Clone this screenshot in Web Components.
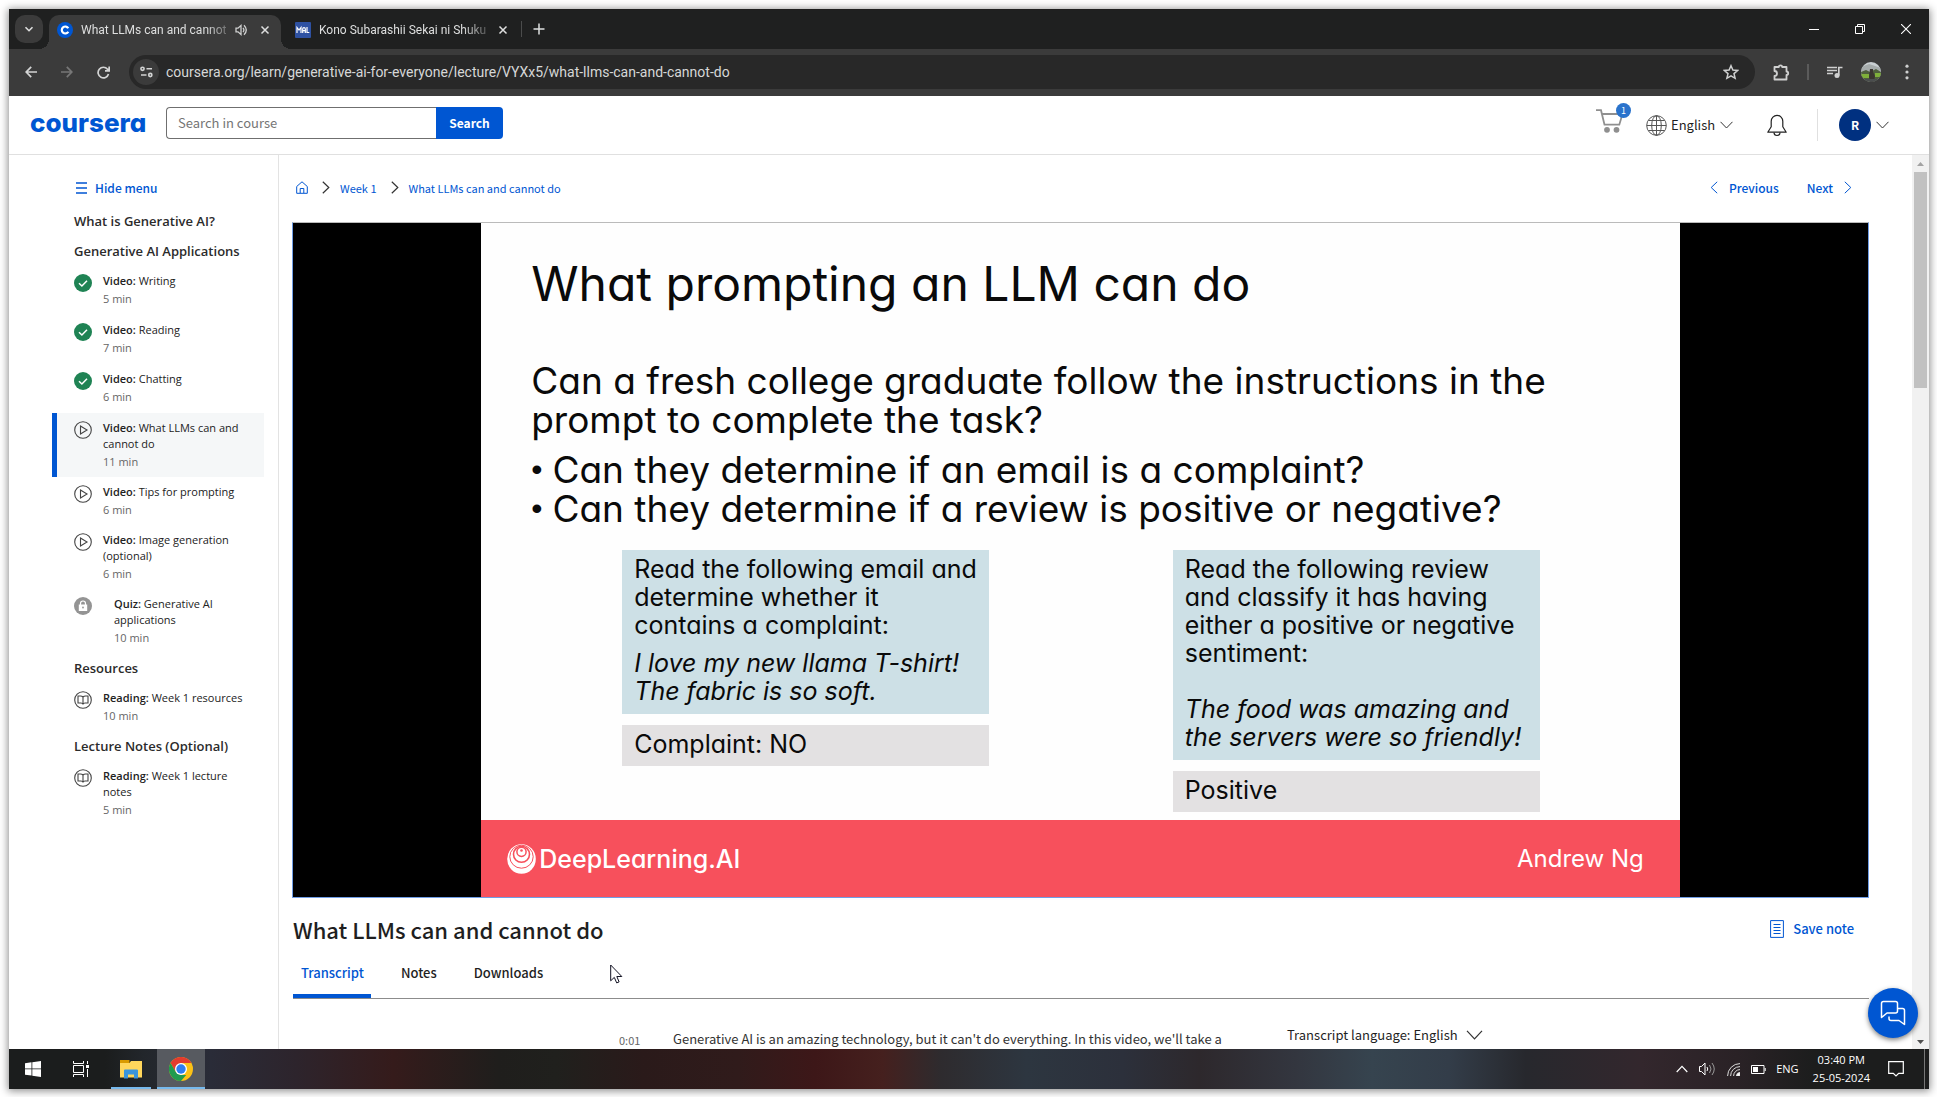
<!DOCTYPE html>
<html lang="en">
<head>
<meta charset="utf-8">
<title>What LLMs can and cannot do | Coursera</title>
<style>
  html, body { height: 100%; }
  body { margin: 0; box-sizing: border-box; padding: 9px 8px 8px 9px; background: #fff; font-family: "Noto Sans CJK SC", "Open Sans", sans-serif; color: #1f1f1f; overflow: hidden; }
</style>
</head>
<body>
<desktop-screen>
  <browser-tabs></browser-tabs>
  <browser-toolbar></browser-toolbar>
  <course-header></course-header>
  <course-body>
    <course-sidebar slot="side">
      <nav-section heading="What is Generative AI?"></nav-section>
      <nav-section heading="Generative AI Applications">
        <nav-item kind="Video" icon="done" time="5 min">Writing</nav-item>
        <nav-item kind="Video" icon="done" time="7 min">Reading</nav-item>
        <nav-item kind="Video" icon="done" time="6 min">Chatting</nav-item>
        <nav-item kind="Video" icon="play" time="11 min" active>What LLMs can and cannot do</nav-item>
        <nav-item kind="Video" icon="play" time="6 min">Tips for prompting</nav-item>
        <nav-item kind="Video" icon="play" time="6 min">Image generation (optional)</nav-item>
        <nav-item kind="Quiz" icon="lock" time="10 min">Generative AI applications</nav-item>
      </nav-section>
      <nav-section heading="Resources">
        <nav-item kind="Reading" icon="book" time="10 min">Week 1 resources</nav-item>
      </nav-section>
      <nav-section heading="Lecture Notes (Optional)">
        <nav-item kind="Reading" icon="book" time="5 min">Week 1 lecture notes</nav-item>
      </nav-section>
    </course-sidebar>
    <lecture-main>
      <video-stage>
        <lecture-slide></lecture-slide>
      </video-stage>
    </lecture-main>
  </course-body>
  <task-bar slot="taskbar"></task-bar>
</desktop-screen>

<script>
const base = `:host,*{box-sizing:border-box} button{font:inherit;color:inherit;background:none;border:0;padding:0;margin:0;display:flex;align-items:center} a{color:inherit;text-decoration:none} svg{display:block;flex:none} select{appearance:none;font:inherit;color:inherit;background:none;border:0;padding:0;margin:0}`;
function define(name, render) {
  customElements.define(name, class extends HTMLElement {
    connectedCallback() {
      if (this.shadowRoot) return;
      this.attachShadow({ mode: 'open' }).innerHTML = render(this);
    }
  });
}
const S = css => `<style>${base}${css}</style>`;

define('desktop-screen', () => S(`
  :host{display:flex;flex-direction:column;height:100%;background:#fff;box-shadow:0 1px 8px 1px rgba(0,0,0,.45)}
  .win{flex:1;min-height:0;display:flex;flex-direction:column}
`) + `<div class="win"><slot></slot></div><slot name="taskbar"></slot>`);

define('browser-tabs', () => S(`
  :host{display:flex;flex:none;height:40px;background:#1f2020;color:#dedfdf;font:12px/16px Roboto,sans-serif;padding:6px 0 0 6px;align-items:flex-start}
  .search{width:28px;height:28px;border-radius:10px;background:#3b3b3b;justify-content:center}
  .tab{display:flex;align-items:center;height:34px;padding:0 11px 5px 8px;width:232px;margin-left:6px;gap:8px}
  .tab.on{background:#3b3b3b;border-radius:10px 10px 0 0;position:relative}
  .tab.on::before,.tab.on::after{content:"";position:absolute;bottom:0;width:10px;height:10px}
  .tab.on::before{left:-10px;background:radial-gradient(circle at 0 0,transparent 10px,#3b3b3b 10px)}
  .tab.on::after{right:-10px;background:radial-gradient(circle at 100% 0,transparent 10px,#3b3b3b 10px)}
  .t{flex:1;white-space:nowrap;-webkit-mask-image:linear-gradient(90deg,#000 86%,rgba(0,0,0,.3))}
  .x{margin-left:4px}
  .sep{width:1px;height:16px;background:#4b4c4c;margin:6px 11px 0 2px}
  .plus{margin-top:8px}
  .ctl{margin-left:auto;display:flex;gap:36px;padding:9px 18px 0 0}
`) + `
  <button class="search" aria-label="Search tabs"><svg width="10" height="10" viewBox="0 0 10 10" fill="none" stroke="#dedfdf" stroke-width="1.6"><path d="M1.5 3.2 5 6.7 8.500 3.200"/></svg></button>
  <div class="tab on">
    <svg width="16" height="16" viewBox="0 0 16 16"><circle cx="8" cy="8" r="8" fill="#0056d2"/><path d="M11.300 9.800A3.500 3.500 0 1 1 11.300 6.200" fill="none" stroke="#fff" stroke-width="2.200"/></svg>
    <span class="t">What LLMs can and cannot</span>
    <svg width="13" height="12" viewBox="0 0 13 12" fill="none" stroke="#cfd0d0" stroke-width="1.300"><path d="M1 4.200h2L6 1.500v9L3 7.800H1zM8 3.800q1.800 2.200 0 4.400M9 1.200q4.600 4.800 0 9.600"/></svg>
    <button class="x" aria-label="Close tab"><svg width="10" height="10" viewBox="0 0 10 10" stroke="#dedfdf" stroke-width="1.500"><path d="M1.500 1.500l7 7M8.500 1.500l-7 7"/></svg></button>
  </div>
  <div class="tab">
    <svg width="16" height="16" viewBox="0 0 16 16"><rect width="16" height="16" rx="1" fill="#2e51a2"/><path d="M2 11V5.500L4 8 6 5.500V11M7.700 11V7q0-1.300 1.300-1.300T10.300 7v4M7.700 8.700h2.600M12 5v5.500h2.300" fill="none" stroke="#fff" stroke-width="1.200"/></svg>
    <span class="t">Kono Subarashii Sekai ni Shuku</span>
    <button class="x" aria-label="Close tab"><svg width="10" height="10" viewBox="0 0 10 10" stroke="#dedfdf" stroke-width="1.500"><path d="M1.500 1.500l7 7M8.500 1.500l-7 7"/></svg></button>
  </div>
  <i class="sep"></i>
  <button class="plus" aria-label="New tab"><svg width="12" height="12" viewBox="0 0 12 12" stroke="#dedfdf" stroke-width="1.500"><path d="M6 .5v11M.5 6h11"/></svg></button>
  <div class="ctl">
    <button aria-label="Minimize"><svg width="10" height="10" viewBox="0 0 10 10" stroke="#fff"><path d="M0 5.500h10"/></svg></button>
    <button aria-label="Restore"><svg width="10" height="10" viewBox="0 0 10 10" stroke="#fff" fill="none"><path d="M.5 2.500h7v7h-7zM2.500 2.500v-2h7v7h-2"/></svg></button>
    <button aria-label="Close"><svg width="10" height="10" viewBox="0 0 10 10" stroke="#fff" stroke-width="1.100"><path d="M0 0l10 10M10 0 0 10"/></svg></button>
  </div>`);

define('browser-toolbar', () => S(`
  :host{display:flex;flex:none;align-items:center;height:47px;background:#3b3b3b;color:#e3e3e3;padding:0 20px 1px 16px}
  .nav{display:flex;gap:24px;margin-right:19px}
  .omni{flex:1;height:34px;border-radius:17px;background:#282828;display:flex;align-items:center;padding:0 16px 0 4px;margin-right:18px}
  .site{width:26px;height:26px;border-radius:13px;background:#3b3b3b;justify-content:center}
  input{flex:1;min-width:0;margin-left:7px;background:none;border:0;padding:0;outline:0;color:#d6d7d7;font:14px/20px Roboto,sans-serif}
  .sep{width:2px;height:16px;background:#5b5b5b;margin:0 18px 0 17px}
  .prof{margin:0 24px 0 18px}
`) + `
  <div class="nav">
    <button aria-label="Back"><svg width="12" height="12" viewBox="0 0 12 12" fill="none" stroke="#d3d4d4" stroke-width="1.700"><path d="M6.200.8 1.200 6l5 5.200M1.200 6H12"/></svg></button>
    <button aria-label="Forward"><svg width="12" height="12" viewBox="0 0 12 12" fill="none" stroke="#777" stroke-width="1.700"><path d="M5.800.8l5 5.200-5 5.200M10.800 6H0"/></svg></button>
    <button aria-label="Reload"><svg width="13" height="13" viewBox="0 0 13 13" fill="none" stroke="#d3d4d4" stroke-width="1.700"><path d="M11.500 8A5.300 5.300 0 1 1 10.500 3.200L12 4.600M12.200.5v4.300H8"/></svg></button>
  </div>
  <div class="omni">
    <button class="site" aria-label="View site information"><svg width="13" height="12" viewBox="0 0 13 12" fill="none" stroke="#d3d4d4" stroke-width="1.600"><circle cx="2.500" cy="2.800" r="1.600"/><path d="M6.500 2.800H12M1 9h5.500"/><circle cx="10.300" cy="9" r="1.600"/></svg></button>
    <input aria-label="Address" value="coursera.org/learn/generative-ai-for-everyone/lecture/VYXx5/what-llms-can-and-cannot-do">
    <button aria-label="Bookmark"><svg width="16" height="16" viewBox="0 0 16 16" fill="none" stroke="#cfd0d0" stroke-width="1.500"><path d="M8 1.700l1.900 4.400 4.700.4-3.600 3.100 1.100 4.700L8 11.800l-4.100 2.500L5 9.600 1.400 6.500l4.700-.4z"/></svg></button>
  </div>
  <button aria-label="Extensions"><svg width="17" height="17" viewBox="0 0 17 17" fill="none" stroke="#cfd0d0" stroke-width="1.800" stroke-linejoin="round"><path d="M1.500 3h4.300a1.700 1.700 0 0 1 3.400 0h4.300v4.500a1.700 1.700 0 0 1 0 3.400V15.500h-12v-3.500a2.300 2.300 0 0 0 0-5z"/></svg></button>
  <i class="sep"></i>
  <button aria-label="Media"><svg width="16" height="14" viewBox="0 0 16 14"><path d="M0 2.500h10M0 5.500h10M0 8.500h6" stroke="#cfd0d0" stroke-width="1.600"/><circle cx="10" cy="10.500" r="2.500" fill="#cfd0d0"/><path d="M11.800 10.500V2.500H15.500" fill="none" stroke="#cfd0d0" stroke-width="1.700"/></svg></button>
  <button class="prof" aria-label="Profile"><svg width="20" height="20" viewBox="0 0 20 20"><defs><clipPath id="c"><circle cx="10" cy="10" r="10"/></clipPath></defs><g clip-path="url(#c)"><path fill="#c9cfd2" d="M0 0h20v20H0z"/><path fill="#a5abab" d="M0 5l8-3 12 4v4H0z"/><path fill="#4f5f3d" d="M0 10l5-2 4 2 6-3 5 3v11H0z"/><path fill="#7fb03a" d="M0 12h8v4H0zM14 11h6v4h-6z"/><path fill="#3a3530" d="M9 7h3v3l2 4-1 6H9l-1-5z"/><path fill="#4a4d4e" d="M0 17h20v3H0z"/></g></svg></button>
  <button aria-label="Menu"><svg width="4" height="16" viewBox="0 0 4 16" fill="#cfd0d0"><circle cx="2" cy="2.200" r="1.600"/><circle cx="2" cy="8" r="1.600"/><circle cx="2" cy="13.800" r="1.600"/></svg></button>`);

define('course-header', () => S(`
  :host{display:flex;flex:none;align-items:center;height:59px;border-bottom:1px solid #e0e0e0;padding:0 40px 0 21px;font-size:13px;line-height:20px}
  .logo{font:800 26px/30px Inter,sans-serif;font-feature-settings:"cv11";color:#0056d2;width:136px;margin-top:-4px}
  form{display:flex;height:32px;margin-top:-4px}
  input{width:270px;border:1px solid #6f6f6f;border-right:0;border-radius:4px 0 0 4px;padding:0 11px;font:13px/20px "Noto Sans CJK SC",sans-serif;outline:0;color:#1f1f1f}
  input::placeholder{color:#757575;opacity:1}
  form button{width:67px;justify-content:center;background:#0056d2;color:#fff;font-weight:700;font-size:12px;border-radius:0 4px 4px 0}
  .cart{margin-left:auto;position:relative;margin-right:22px;margin-top:-8px}
  .badge{position:absolute;right:-7px;top:-6px;width:15px;height:15px;border-radius:8px;background:#2a73cc;color:#fff;font-size:9px;line-height:15px;text-align:center}
  .lang{display:flex;align-items:center;gap:4px;margin-right:34px}
  .sep{width:1px;height:32px;background:#e0e0e0;margin:0 21px 0 30px}
  .me{gap:5px}
  .av{width:32px;height:32px;border-radius:16px;background:#003080;color:#fff;font-weight:700;font-size:12px;line-height:32px;text-align:center}
`) + `
  <a class="logo" href="#">coursera</a>
  <form><input type="text" aria-label="Search in course" placeholder="Search in course"><button type="button">Search</button></form>
  <button class="cart" aria-label="Cart"><svg width="28" height="24" viewBox="0 0 28 24" fill="none" stroke="#8f8f8f" stroke-width="1.800"><path d="M0 1.200h5l3.500 14.500h14.800L26.500 5H6"/><circle cx="11" cy="20.800" r="2" fill="#8f8f8f"/><circle cx="20.500" cy="20.800" r="2" fill="#8f8f8f"/></svg><span class="badge">1</span></button>
  <label class="lang"><svg width="21" height="21" viewBox="0 0 21 21" fill="none" stroke="#555"><circle cx="10.500" cy="10.500" r="9.800"/><ellipse cx="10.500" cy="10.500" rx="4.800" ry="9.800"/><path d="M10.500.7v19.600M.7 10.500h19.600M2.500 5.500h16M2.500 15.500h16"/></svg>
    <select aria-label="Language"><option>English</option></select>
    <svg width="13" height="8" viewBox="0 0 13 8" fill="none" stroke="#333"><path d="M.5.800l6 6.200 6-6.200"/></svg></label>
  <button aria-label="Notifications"><svg width="20" height="23" viewBox="0 0 20 23" fill="none" stroke="#222" stroke-width="1.200"><path d="M.8 18.200h18.400l-3.400-5.400V7.200a5.800 5.800 0 0 0-11.600 0v5.600z" stroke-linejoin="round"/><path d="M7 18.500a3 3 0 0 0 6 0"/></svg></button>
  <i class="sep"></i>
  <button class="me" aria-label="Account"><span class="av">R</span><svg width="13" height="8" viewBox="0 0 13 8" fill="none" stroke="#333"><path d="M.5.800l6 6.200 6-6.200"/></svg></button>`);

define('course-body', () => S(`
  :host{display:flex;flex:1;min-height:0;overflow:hidden;position:relative}
  .bar{width:17px;flex:none;background:#f1f1f1;display:flex;flex-direction:column;align-items:center;padding:7px 0 5px}
  .thumb{width:13px;flex:0 0 216px;background:#c1c1c1;margin:6px 0 auto}
  .chat{position:absolute;right:11px;bottom:11px;width:50px;height:50px;border-radius:25px;background:#0056d2;justify-content:center;box-shadow:0 2px 5px rgba(0,0,0,.5)}
`) + `<slot name="side"></slot><slot></slot>
  <div class="bar"><svg width="7" height="4" viewBox="0 0 7 4"><path d="M0 4 3.500 0 7 4z" fill="#a3a3a3"/></svg><div class="thumb"></div><svg width="7" height="4" viewBox="0 0 7 4"><path d="M0 0 3.500 4 7 0z" fill="#505050"/></svg></div>
  <button class="chat" aria-label="Chat"><svg width="26" height="26" viewBox="0 0 26 26" fill="none" stroke="#fff" stroke-width="1.500" stroke-linejoin="round"><path d="M3.500 1.500h12q2 0 2 2V11q0 2-2 2H7l-5.500 4.500V3.500q0-2 2-2z"/><path d="M17.500 8.500h5q2 0 2 2V24.500L19 20.500h-8q-2 0-2-2V16.500"/></svg></button>`);

define('course-sidebar', () => S(`
  :host{display:block;width:270px;flex:none;border-right:1px solid #e3e3e3;padding:22px 14px 0 43px}
  .hide{color:#0056d2;font-weight:500;font-size:12px;line-height:22px;gap:8px;margin:0 0 7px 24px}
`) + `<button class="hide"><svg width="11" height="12" viewBox="0 0 11 12" stroke="#0056d2" stroke-width="1.500"><path d="M0 1h11M0 6h11M0 11h11"/></svg>Hide menu</button><nav aria-label="Course"><slot></slot></nav>`);

define('nav-section', el => S(`
  :host{display:block}
  h2{margin:0 0 0 22px;font:600 13px/30px "Open Sans",sans-serif;color:#2b2b2b;white-space:nowrap}
`) + `<h2>${el.getAttribute('heading')}</h2><slot></slot>`);

const icons = {
  done: `<circle cx="9" cy="9" r="9" fill="#1f8354"/><path d="M5 9.200l2.900 2.800 5.100-5.300" fill="none" stroke="#fff" stroke-width="1.500"/>`,
  play: `<g fill="none" stroke="#444" stroke-width="1.100"><circle cx="9" cy="9" r="8.300"/><path d="M6.500 5v8l6.500-4z"/></g>`,
  lock: `<circle cx="9" cy="9" r="9" fill="#949494"/><path d="M4.800 7.500h8.400V14H4.800z" fill="#fff"/><path d="M6.500 8V6.500a2.500 2.500 0 0 1 5 0V8" fill="none" stroke="#fff" stroke-width="1.200"/><circle cx="9" cy="10.500" r=".9" fill="#949494"/>`,
  book: `<g fill="none" stroke="#444" stroke-width="1.100"><circle cx="9" cy="9" r="8.300"/><path d="M9 13.200V6q-1-1-2.500-1H4v7h3q1.500 0 2 1.200M9 6q1-1 2.500-1H14v7h-3q-1.500 0-2 1.200"/></g>`
};
define('nav-item', el => S(`
  :host{display:block}
  :host([icon=done]){margin-bottom:1px}
  a{display:flex;padding:7px 16px 7px 17px;border-left:5px solid transparent;font:11px/16px "Open Sans",sans-serif;color:#222}
  svg{margin:1px 11px 0 0}
  b{font-weight:600}
  .d{color:#666;margin-top:2px}
  .quiz{padding-left:11px}
  :host([active]) a{background:#f5f7f8;border-left-color:#0056d2}
`) + `<a href="#"><svg width="18" height="18" viewBox="0 0 18 18">${icons[el.getAttribute('icon')]}</svg><div class="${el.getAttribute('kind').toLowerCase()}"><b>${el.getAttribute('kind')}:</b> <slot></slot><div class="d">${el.getAttribute('time')}</div></div></a>`);

define('lecture-main', () => S(`
  :host{display:block;flex:1;min-width:0;padding:0 43px 0 13px;position:relative;font-size:13px;line-height:20px}
  .top{display:flex;align-items:center;height:67px;color:#0056d2;padding-bottom:2px}
  .top nav{display:flex;align-items:center;font-size:11px;padding-left:4px}
  .chev{margin:0 10px 0 14px}
  .pn{margin-left:auto;display:flex;gap:28px;padding-right:17px;font-weight:500;font-size:12px}
  .pn a{display:flex;align-items:center;gap:11px}
  .head{display:flex;align-items:center;justify-content:space-between;height:64px;padding:0 15px 2px 1px}
  h1{margin:0;font-weight:500;font-size:22px;line-height:32px}
  .save{color:#0056d2;font-weight:500;gap:9px}
  .tabs{display:flex;gap:22px;border-bottom:1px solid #8c8c8c;margin-left:1px;font-weight:500}
  .tabs button{height:36px;padding:0 7px 10px 8px;border-bottom:4px solid transparent}
  .tabs .on{color:#0056d2;border-bottom-color:#0056d2;border-radius:2px 2px 0 0}
  .tr{display:flex;padding:30px 0 0 327px;white-space:nowrap}
  .time{width:54px;color:#666;font-size:11px;padding-top:1px}
  .line{width:614px;color:#333}
  .tl{display:flex;align-items:center;gap:3px;height:20px;margin-top:-4px}
  .tl select{margin-right:5px}
  .cursor{position:absolute;left:331px;top:809px}
`) + `
  <div class="top"><nav aria-label="Breadcrumb">
    <a href="#" aria-label="Home"><svg width="12" height="13" viewBox="0 0 12 13" fill="none" stroke="#0056d2"><path d="M.7 5.500 6 .8l5.300 4.700v6.800H.7z"/><path d="M4.200 12V7.500h3.600V12"/></svg></a>
    <svg class="chev" width="8" height="13" viewBox="0 0 8 13" fill="none" stroke="#333" stroke-width="1.200"><path d="M.8.800l6 5.700-6 5.700"/></svg>
    <a href="#">Week 1</a>
    <svg class="chev" width="8" height="13" viewBox="0 0 8 13" fill="none" stroke="#333" stroke-width="1.200"><path d="M.8.800l6 5.700-6 5.700"/></svg>
    <a href="#">What LLMs can and cannot do</a></nav>
    <div class="pn"><a href="#"><svg width="8" height="13" viewBox="0 0 8 13" fill="none" stroke="#0056d2"><path d="M7.200.8l-6 5.700 6 5.700"/></svg>Previous</a><a href="#">Next<svg width="8" height="13" viewBox="0 0 8 13" fill="none" stroke="#0056d2"><path d="M.8.800l6 5.700-6 5.700"/></svg></a></div>
  </div>
  <slot></slot>
  <div class="head"><h1>What LLMs can and cannot do</h1>
    <button class="save"><svg width="14" height="18" viewBox="0 0 14 18" fill="none" stroke="#0056d2"><path d="M.6.600h12.800v16.800H.6zM3.500 4.500h7M3.500 7.500h7M3.500 10.500h7M3.500 13.500h7"/></svg>Save note</button></div>
  <div class="tabs" role="tablist"><button class="on" role="tab">Transcript</button><button role="tab">Notes</button><button role="tab">Downloads</button></div>
  <div class="tr"><span class="time">0:01</span><span class="line">Generative AI is an amazing technology, but it can't do everything. In this video, we'll take a</span>
    <div class="tl"><label for="tl">Transcript language:</label><select id="tl"><option>English</option></select><svg width="17" height="10" viewBox="0 0 17 10" fill="none" stroke="#333" stroke-width="1.200"><path d="M1 .8l7.500 8L16 .8"/></svg></div></div>
  <svg class="cursor" width="13" height="20" viewBox="0 0 13 20"><path d="M.7 1v15.800l3.600-3.400 2.400 5.500 2.400-1-2.300-5.400h5z" fill="#fff" stroke="#112" stroke-width="1"/></svg>`);

define('video-stage', () => S(`
  :host{display:flex;justify-content:center;background:#000;border:1px solid #6f9de6;border-top-color:#bbb}
`) + `<slot></slot>`);

define('lecture-slide', () => S(`
  :host{display:flex;flex-direction:column;width:76.1%;aspect-ratio:16/9;background:#fefefe;color:#0a0a0a;font-family:Inter,sans-serif;font-feature-settings:"cv11"}
  .b{padding:33px 140px 0 50px;white-space:nowrap}
  h2{margin:0;font-weight:400;font-size:48px;line-height:56px}
  p,ul{margin:0;padding:0;list-style:none;font-size:37px;line-height:39px}
  .q{margin-top:49px}
  ul{margin-top:11px}
  li{display:flex;gap:10px}
  .dot{font-family:"Liberation Sans",sans-serif;font-size:32px}
  .cols{display:flex;justify-content:space-between;padding-left:91px;margin-top:22px;align-items:flex-start}
  .col{width:367px;display:flex;flex-direction:column;gap:11px}
  .col p{font-size:25px;line-height:28px}
  .in{background:#cde0e6;padding:5px 0 9px 12px;display:flex;flex-direction:column;gap:10px}
  .in.gap{gap:28px}
  .col .out{background:#e3e1e2;padding:5px 12px 8px}
  footer{margin-top:auto;height:77px;background:#f7505c;color:#fff;display:flex;justify-content:space-between;align-items:center;padding:0 36px 0 26px;font-size:24px;line-height:30px}
  .brand{display:flex;align-items:center;gap:3px;font-weight:500;font-size:25px}
`) + `
  <div class="b"><h2>What prompting an LLM can do</h2>
  <p class="q">Can a fresh college graduate follow the instructions in the<br>prompt to complete the task?</p>
  <ul><li><span class="dot">•</span><span>Can they determine if an email is a complaint?</span></li><li><span class="dot">•</span><span>Can they determine if a review is positive or negative?</span></li></ul>
  <div class="cols">
    <div class="col"><div class="in"><p>Read the following email and<br>determine whether it<br>contains a complaint:</p><p><i>I love my new llama T-shirt!<br>The fabric is so soft.</i></p></div><p class="out">Complaint: NO</p></div>
    <div class="col"><div class="in gap"><p>Read the following review<br>and classify it has having<br>either a positive or negative<br>sentiment:</p><p><i>The food was amazing and<br>the servers were so friendly!</i></p></div><p class="out">Positive</p></div>
  </div></div>
  <footer><span class="brand"><svg width="29" height="30" viewBox="0 0 29 30"><ellipse cx="14.500" cy="15" rx="14.300" ry="14.800" fill="#fff"/><g fill="none" stroke="#f7505c"><ellipse cx="14.500" cy="12.700" rx="11.700" ry="11.500" stroke-width="1"/><circle cx="14.500" cy="10.300" r="8" stroke-width="1.600"/><circle cx="14.500" cy="7.800" r="4.600" stroke-width="1.500"/></g><circle cx="14.500" cy="6.500" r="1.300" fill="#f7505c"/></svg>DeepLearning.AI</span><span>Andrew Ng</span></footer>`);

define('task-bar', () => S(`
  :host{display:flex;flex:none;height:40px;color:#fff;font:11px/18px "Open Sans",sans-serif;align-items:stretch;
   background:linear-gradient(90deg,#1b1d1d 5%,#22262b 7%,#2a2c38 10.500%,#2d242c 15%,#351b1b 20%,#1f1e1c 25.500%,#20201d 28.500%,#2a1a1a 33%,#301b1b 38%,#3d1718 42%,#45201e 45.500%,#2e2b2e 48.500%,#2d3640 53%,#2c303b 58%,#2d282c 62%,#33363f 67%,#36444f 71%,#333d49 75%,#27282d 79%,#33272d 85%,#2a2226 90%,#1c1d1d 94%)}
  button{justify-content:center;width:48px;position:relative}
  .run{margin-left:2px}
  .run::after{content:"";position:absolute;left:4px;right:4px;bottom:0;height:2px;background:#76b9ed}
  .on{background:#575a60}.on::after{left:0;right:0}
  .sys{margin-left:auto;display:flex;align-items:center;padding-right:4px}
  .sys svg{margin-right:11px}
  .clk{text-align:center;margin:0 18px 0 14px}
  .end{border-left:1px solid #777;align-self:stretch;margin-left:9px}
  .sys svg:nth-of-type(4){margin-right:10px}
`) + `
  <button aria-label="Start"><svg width="16" height="16" viewBox="0 0 16 16" fill="#fff"><path d="M0 2.200 6.500 1.300V7.500H0zM7.300 1.200 16 0v7.500H7.300zM0 8.300h6.500v6.300L0 13.700zM7.300 8.300H16V16L7.300 14.700z"/></svg></button>
  <button aria-label="Task view"><svg width="17" height="16" viewBox="0 0 17 16" fill="none" stroke="#fff"><path d="M.5 0v2.500h10V0M.5 16v-2.500h10V16M.5 4.500h10v7H.5zM14.500 0v3M14.500 8v8"/><path d="M13 4h3v3h-3z" fill="#fff" stroke="none"/></svg></button>
  <button class="run" aria-label="File Explorer"><svg width="22" height="19" viewBox="0 0 22 19"><path d="M0 0h9.500v3H0z" fill="#d99a00"/><path d="M0 3h9.500L11 1h11v16.500H0z" fill="#ffd65c"/><path d="M4 18.500V10.500q0-1 1-1h12q1 0 1 1v8h-4v-4H8v4z" fill="#3a94dc"/></svg></button>
  <button class="run on" aria-label="Chrome"><svg width="24" height="24" viewBox="0 0 24 24"><circle cx="12" cy="12" r="12" fill="#fbc116"/><path d="M1.600 6A12 12 0 0 1 22.400 6H12L6.800 15z" fill="#e33b2e"/><path d="M1.600 6 6.800 15 12 18h5.200L12 24A12 12 0 0 1 1.600 6z" fill="#219b4e"/><circle cx="12" cy="12" r="6" fill="#fff"/><circle cx="12" cy="12" r="4.700" fill="#2f7df0"/></svg></button>
  <div class="sys">
    <svg width="12" height="8" viewBox="0 0 12 8" fill="none" stroke="#fff" stroke-width="1.200"><path d="M.7 7 6 1.300 11.300 7"/></svg>
    <svg width="17" height="14" viewBox="0 0 17 14" fill="none" stroke="#fff"><path d="M.5 4.500h2L6 1v12L2.500 9.500h-2zM8 5q1.500 2 0 4"/><path d="M10.500 3q3 4 0 8M13 1q4.500 6 0 12" stroke="#999"/></svg>
    <svg width="13" height="13" viewBox="0 0 13 13" fill="none" stroke="#ddd"><path d="M.6 13A12.400 12.400 0 0 1 13 .6M3.600 13A9.400 9.400 0 0 1 13 3.600M6.600 13A6.400 6.400 0 0 1 13 6.600"/><path d="M9.500 13A3.500 3.500 0 0 1 13 9.500V13z" fill="#fff"/></svg>
    <svg width="15" height="9" viewBox="0 0 15 9" fill="none" stroke="#fff"><path d="M.5.500h12.500v8H.5zM14.200 3v3"/><path d="M2 2h5v5H2z" fill="#fff" stroke="none"/></svg>
    <span>ENG</span>
    <div class="clk">03:40 PM<br>25-05-2024</div>
    <svg width="16" height="16" viewBox="0 0 16 16" fill="none" stroke="#fff" stroke-width="1.200"><path d="M.7.700h14.600v11.600h-4.600L8 15l-2.700-2.700H.7z"/></svg>
    <i class="end"></i>
  </div>`);
</script>
</body>
</html>
